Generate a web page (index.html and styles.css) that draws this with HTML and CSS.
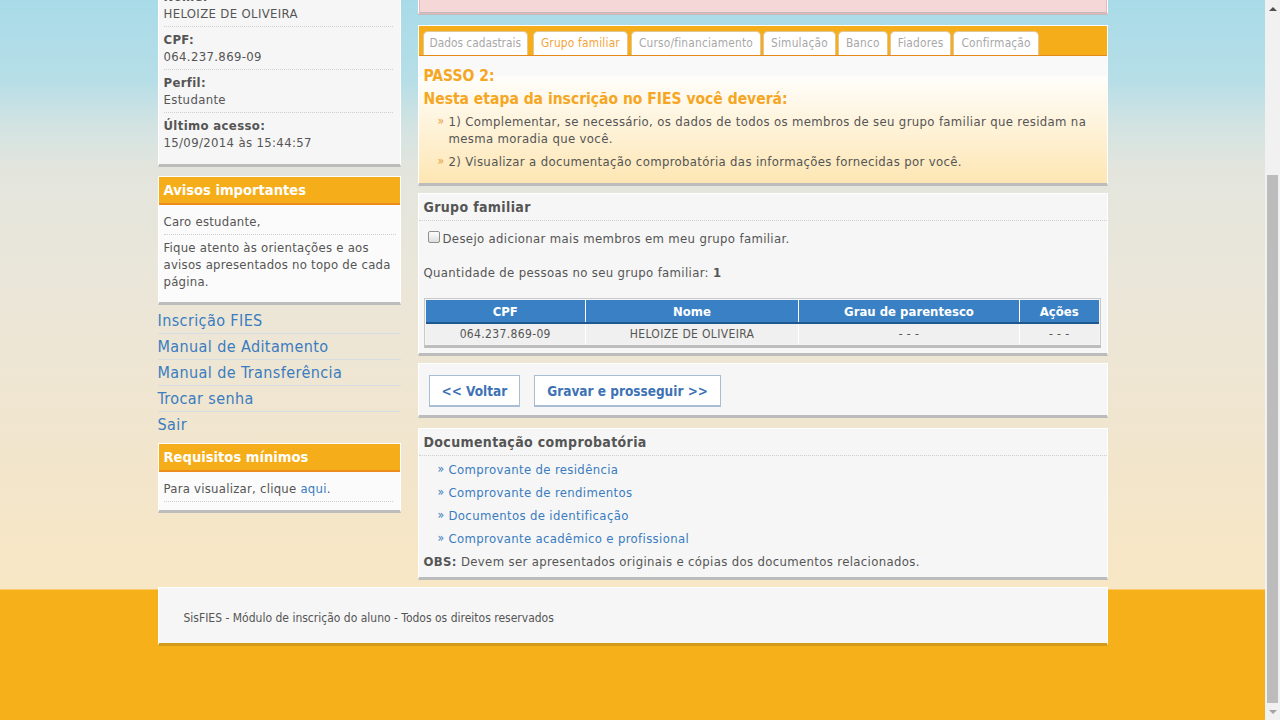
FILE: index.html
```html
<!DOCTYPE html>
<html lang="pt-BR">
<head>
<meta charset="utf-8">
<title>SisFIES - Inscrição</title>
<link rel="stylesheet" href="styles.css">
</head>
<body>
<div class="viewport">
  <div class="page">
    <div class="wrap">
      <aside class="side">
        <div class="box userbox">
          <div class="uitem"><div class="lbl">Nome:</div><div class="val">HELOIZE DE OLIVEIRA</div></div>
          <div class="uitem"><div class="lbl">CPF:</div><div class="val">064.237.869-09</div></div>
          <div class="uitem"><div class="lbl">Perfil:</div><div class="val">Estudante</div></div>
          <div class="uitem last"><div class="lbl">Último acesso:</div><div class="val">15/09/2014 às 15:44:57</div></div>
        </div>

        <div class="box">
          <div class="box-head">Avisos importantes</div>
          <div class="box-body">
            <p class="bitem">Caro estudante,</p>
            <p class="bitem last">Fique atento às orientações e aos avisos apresentados no topo de cada página.</p>
          </div>
        </div>

        <ul class="menu">
          <li><a href="#">Inscrição FIES</a></li>
          <li><a href="#">Manual de Aditamento</a></li>
          <li><a href="#">Manual de Transferência</a></li>
          <li><a href="#">Trocar senha</a></li>
          <li><a href="#">Sair</a></li>
        </ul>

        <div class="box">
          <div class="box-head">Requisitos mínimos</div>
          <div class="box-body req">
            <p class="bitem">Para visualizar, clique <a href="#">aqui</a>.</p>
          </div>
        </div>
      </aside>

      <main class="main">
        <div class="alert">(…)</div>

        <div class="panel tabs-panel">
          <ul class="tabs">
            <li class="tab">Dados cadastrais</li>
            <li class="tab active">Grupo familiar</li>
            <li class="tab">Curso/financiamento</li>
            <li class="tab">Simulação</li>
            <li class="tab">Banco</li>
            <li class="tab">Fiadores</li>
            <li class="tab">Confirmação</li>
          </ul>
          <div class="tab-body">
            <h2 class="step">PASSO 2:</h2>
            <h2 class="step">Nesta etapa da inscrição no FIES você deverá:</h2>
            <ul class="raquo">
              <li>1) Complementar, se necessário, os dados de todos os membros de seu grupo familiar que residam na mesma moradia que você.</li>
              <li>2) Visualizar a documentação comprobatória das informações fornecidas por você.</li>
            </ul>
          </div>
        </div>

        <div class="panel">
          <h3 class="panel-title">Grupo familiar</h3>
          <div class="panel-body">
            <label class="check"><span class="cbox"></span>Desejo adicionar mais membros em meu grupo familiar.</label>
            <p class="qty">Quantidade de pessoas no seu grupo familiar: <b>1</b></p>
            <div class="table-wrap">
              <table class="grid">
                <thead>
                  <tr><th class="c1">CPF</th><th class="c2">Nome</th><th class="c3">Grau de parentesco</th><th class="c4">Ações</th></tr>
                </thead>
                <tbody>
                  <tr><td>064.237.869-09</td><td>HELOIZE DE OLIVEIRA</td><td>- - -</td><td>- - -</td></tr>
                </tbody>
              </table>
            </div>
          </div>
        </div>

        <div class="panel buttons">
          <button class="btn">&lt;&lt; Voltar</button>
          <button class="btn">Gravar e prosseguir &gt;&gt;</button>
        </div>

        <div class="panel last">
          <h3 class="panel-title">Documentação comprobatória</h3>
          <div class="panel-body docs">
            <ul class="raquo links">
              <li><a href="#">Comprovante de residência</a></li>
              <li><a href="#">Comprovante de rendimentos</a></li>
              <li><a href="#">Documentos de identificação</a></li>
              <li><a href="#">Comprovante acadêmico e profissional</a></li>
            </ul>
            <p class="obs"><b>OBS:</b> Devem ser apresentados originais e cópias dos documentos relacionados.</p>
          </div>
        </div>
      </main>
    </div>

    <footer class="footer">SisFIES - Módulo de inscrição do aluno - Todos os direitos reservados</footer>
  </div>

  <div class="scrollbar">
    <div class="sb-up"></div>
    <div class="sb-track"><div class="sb-thumb"></div></div>
    <div class="sb-down"></div>
  </div>
</div>
</body>
</html>
```

FILE: styles.css
```css
* { box-sizing: border-box; }
html, body { margin: 0; padding: 0; height: 100%; overflow: hidden; }
body {
  font-family: "DejaVu Sans Condensed", "DejaVu Sans", sans-serif;
  font-size: 13px;
  letter-spacing: 0.35px;
  color: #555;
}
p, ul, h2, h3 { margin: 0; padding: 0; }
ul { list-style: none; }
a { color: #3a7cc0; text-decoration: none; }

.viewport { display: flex; height: 720px; }
.page {
  flex: 1;
  overflow: hidden;
  background: linear-gradient(to bottom,
    #a8dbe8 0px, #b6dee7 80px, #d2e3e2 125px, #e3e5dd 170px,
    #e9e6da 260px, #eee6d4 360px, #f2e5cb 470px, #f8e7c4 589px,
    #f5b01a 590px, #f5b01a 720px);
}

.wrap {
  width: 950px;
  margin: -30px auto 0;
  display: flex;
  gap: 17px;
  align-items: flex-start;
}

/* ---------- sidebar ---------- */
.side { width: 243px; flex: none; display: flex; flex-direction: column; }

.box {
  background: #f6f6f6;
  border: 1px solid #fff;
  border-bottom: 3px solid #bcbcbc;
  margin-bottom: 9px;
}
.userbox { padding: 13px 7px 9px 5px; }
.uitem { padding: 4px 0; border-bottom: 1px dotted #cfcfcf; line-height: 17px; }
.uitem.last { border-bottom: 0; }
.lbl { font-weight: bold; }

.box-head {
  background: #f5ae19;
  border-bottom: 2px solid #ec8c1b;
  color: #fff;
  font-weight: bold;
  font-size: 14.6px;
  letter-spacing: 0;
  height: 28px;
  line-height: 26px;
  padding-left: 5px;
}
.box-body { padding: 8px 4px 8px 5px; background: #fbfbfb; letter-spacing: 0.25px; }
.bitem { line-height: 17px; padding: 0 0 4px; border-bottom: 1px dotted #cfcfcf; margin-bottom: 4px; }
.bitem.last { border-bottom: 0; margin-bottom: 0; }
.req { padding-bottom: 8px; }
.req .bitem { margin-bottom: 0; margin-right: 3px; }

.menu { margin: -6px 0 5px; }
.menu li { border-bottom: 1px solid #d6dde3; height: 26px; line-height: 25px; }
.menu li:last-child { border-bottom: 0; }
.menu a { font-size: 16px; letter-spacing: 0.4px; color: #3a7cc0; }

/* ---------- main ---------- */
.main { width: 690px; flex: none; display: flex; flex-direction: column; }

.alert {
  background: #f5d7d8;
  border: 1px solid #fff;
  border-bottom: 3px solid #bcbcbc;
  height: 45px;
  padding: 10px 10px;
  line-height: 17px;
  color: #a05050;
  margin-bottom: 10px;
  outline: 1px solid #e9b5b8;
  outline-offset: -2px;
}

.panel {
  background: #f6f6f6;
  border: 1px solid #fff;
  border-bottom: 3px solid #bcbcbc;
  margin-bottom: 7px;
}
.panel.last { margin-bottom: 0; }

.tabs {
  background: #f5ae19;
  border-bottom: 1px solid #e48a1c;
  display: flex;
  align-items: flex-end;
  height: 30px;
  padding-left: 4px;
}
.tab {
  height: 24px;
  line-height: 23px;
  background: #fff;
  border: 1px solid #e3c597;
  border-bottom: 0;
  border-radius: 5px 5px 0 0;
  color: #a8a8a8;
  font-size: 11.8px;
  letter-spacing: 0.2px;
  padding: 0 7px;
  margin-right: 2px;
}
.tab:first-child { padding: 0 6px; letter-spacing: 0; }
.tab.active { color: #f3a33a; margin-left: 3px; margin-right: 3px; }
.tab-body {
  background: linear-gradient(to bottom, #f9f9f9 0, #f9f9f9 20px, #fffefb 21px, #fde6b3 100%);
  padding: 9px 5px 10px 5px;
  height: 127px;
}
.step { color: #f5a623; font-size: 15.5px; letter-spacing: 0; font-weight: bold; line-height: 23px; }
.raquo li {
  position: relative;
  padding-left: 25px;
  line-height: 17px;
  margin-bottom: 6px;
}
.raquo li::before {
  content: "\00bb";
  position: absolute;
  left: 14px;
  top: 0;
  color: #e8a040;
  font-size: 12px;
}
.tab-body .raquo { margin-top: 2px; }

.panel-title {
  font-size: 14px;
  font-weight: bold;
  color: #555;
  line-height: 26px;
  padding-left: 5px;
  border-bottom: 1px dotted #cfcfcf;
}
.panel-body { padding: 6px 5px 5px 5px; }

.check { display: flex; align-items: center; line-height: 23px; padding-left: 4px; }
.cbox {
  width: 12px; height: 12px;
  border: 1px solid #8f8f8f;
  border-radius: 2px;
  background: linear-gradient(#fdfdfd, #dedede);
  margin-right: 3px;
  margin-top: -3px;
}
.qty { margin-top: 14px; line-height: 17px; }

.table-wrap {
  margin-top: 17px;
  border: 1px solid #c9c9c9;
  border-bottom: 3px solid #bdbdbd;
  padding: 1px;
  background: #f4f4f4;
  width: 677px;
}
.grid { border-collapse: collapse; width: 100%; font-size: 12px; }
.grid th {
  background: #3a80c4;
  color: #fff;
  font-weight: bold;
  font-size: 13px;
  letter-spacing: 0;
  height: 23px;
  border-bottom: 2px solid #1d5890;
  border-left: 1px solid #fff;
}
.grid th:first-child, .grid td:first-child { border-left: 0; }
.grid td {
  background: #f0f0f0;
  text-align: center;
  height: 21px;
  border-left: 1px solid #fff;
}
.c1 { width: 160px; } .c2 { width: 213px; } .c3 { width: 221px; }

.buttons { padding: 11px 10px 8px 10px; display: flex; gap: 14px; margin-bottom: 10px; }
.btn {
  font-family: inherit;
  font-size: 13.5px;
  letter-spacing: 0;
  font-weight: bold;
  color: #3d72b5;
  background: #fff;
  border: 1px solid #a8bed4;
  border-bottom: 2px solid #a8bed4;
  height: 32px;
  padding: 0 12px;
}

.docs { padding-top: 2px; padding-bottom: 4px; }
.links li { line-height: 23px; margin-bottom: 0; }
.links li::before { color: #3a7cc0; }
.obs { line-height: 23px; }

.footer {
  width: 950px;
  margin: 7px auto 0;
  background: #f6f6f6;
  border: 1px solid #fff;
  border-bottom: 3px solid #d49a1a;
  height: 59px;
  padding: 4px 0 0 25px;
  line-height: 53px;
  font-size: 12px;
  letter-spacing: 0;
  color: #555;
}

/* ---------- fake scrollbar ---------- */
.scrollbar { width: 15px; flex: none; background: #f1f1f1; display: flex; flex-direction: column; }
.sb-up, .sb-down { height: 17px; display: flex; align-items: center; justify-content: center; }
.sb-up::before {
  content: ""; border-left: 4px solid transparent; border-right: 4px solid transparent;
  border-bottom: 4px solid #505050;
}
.sb-down::before {
  content: ""; border-left: 4px solid transparent; border-right: 4px solid transparent;
  border-top: 4px solid #a3a3a3;
}
.sb-track { flex: 1; padding: 158px 2px 0 2px; }
.sb-thumb { height: 528px; background: #bcbcbc; }
```
